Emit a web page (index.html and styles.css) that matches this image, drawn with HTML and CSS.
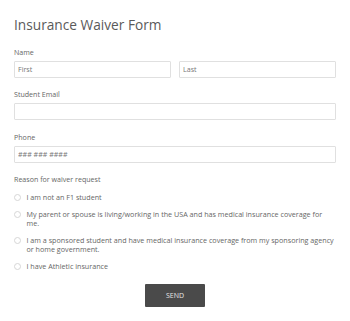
FILE: index.html
```html
<!DOCTYPE html>
<html lang="en">
<head>
  <meta charset="UTF-8" />
  <meta name="viewport" content="width=device-width, initial-scale=1.0"/>
  <title>Insurance Waiver Form</title>
  <link rel="stylesheet" href="styles.css">
</head>
<body>
  <form class="form">
    <h1>Insurance Waiver Form</h1>

    <div class="form-group">
      <label>Name</label>
      <div class="name-row">
        <input type="text" placeholder="First" />
        <input type="text" placeholder="Last" />
      </div>
    </div>

    <div class="form-group">
      <label for="email">Student Email</label>
      <input type="text" id="email" />
    </div>

    <div class="form-group">
      <label for="phone">Phone</label>
      <input type="text" id="phone" placeholder="### ### ####" />
    </div>

    <div class="form-group">
      <label>Reason for waiver request</label>
      <div class="options">
        <label class="option"><input type="radio" name="reason" /><span>I am not an F1 student</span></label>
        <label class="option"><input type="radio" name="reason" /><span>My parent or spouse is living/working in the USA and has medical insurance coverage for me.</span></label>
        <label class="option"><input type="radio" name="reason" /><span>I am a sponsored student and have medical insurance coverage from my sponsoring agency or home government.</span></label>
        <label class="option"><input type="radio" name="reason" /><span>I have Athletic insurance</span></label>
      </div>
    </div>

    <div class="btn-row">
      <button type="button">SEND</button>
    </div>
  </form>
</body>
</html>
```

FILE: styles.css
```css
body {
  font-family: 'Open Sans', 'Liberation Sans', sans-serif;
  background: #fff;
  margin: 0;
  padding: 15px 14px 0;
  color: #666;
}

h1 {
  font-size: 13.7px;
  font-weight: 400;
  line-height: 20px;
  color: #5a5a5a;
  margin: 0 0 12.7px;
}

.form-group {
  margin-bottom: 12.5px;
}

label {
  display: block;
  font-size: 7.1px;
  line-height: 9px;
  margin-bottom: 4px;
  color: #666;
}

input[type="text"] {
  display: block;
  box-sizing: border-box;
  width: 100%;
  height: 17px;
  margin: 0;
  padding: 0 3px;
  border: 1px solid #e0e0e0;
  border-radius: 1px;
  font-family: inherit;
  font-size: 7.1px;
  color: #555;
  background: #fff;
}

input::placeholder {
  color: #777;
}

.name-row {
  display: grid;
  grid-template-columns: 1fr 1fr;
  gap: 8px;
}

.options {
  display: flex;
  flex-direction: column;
  gap: 8.6px;
  padding-top: 5px;
}

.option {
  display: flex;
  align-items: flex-start;
  gap: 5.5px;
  margin: 0;
  font-size: 7.18px;
  line-height: 8.6px;
  color: #666;
}

.option input {
  appearance: none;
  flex: none;
  box-sizing: border-box;
  width: 7px;
  height: 7px;
  margin: 0.8px 0 0;
  border: 1px solid #d6d6d6;
  border-radius: 50%;
  background: #fff;
}

.btn-row {
  display: flex;
  justify-content: center;
  padding-top: 1px;
}

button {
  width: 60px;
  height: 23px;
  background: #4a4a4a;
  color: #e6e6e6;
  border: none;
  border-radius: 1px;
  font-family: inherit;
  font-size: 7px;
  cursor: pointer;
}
```
